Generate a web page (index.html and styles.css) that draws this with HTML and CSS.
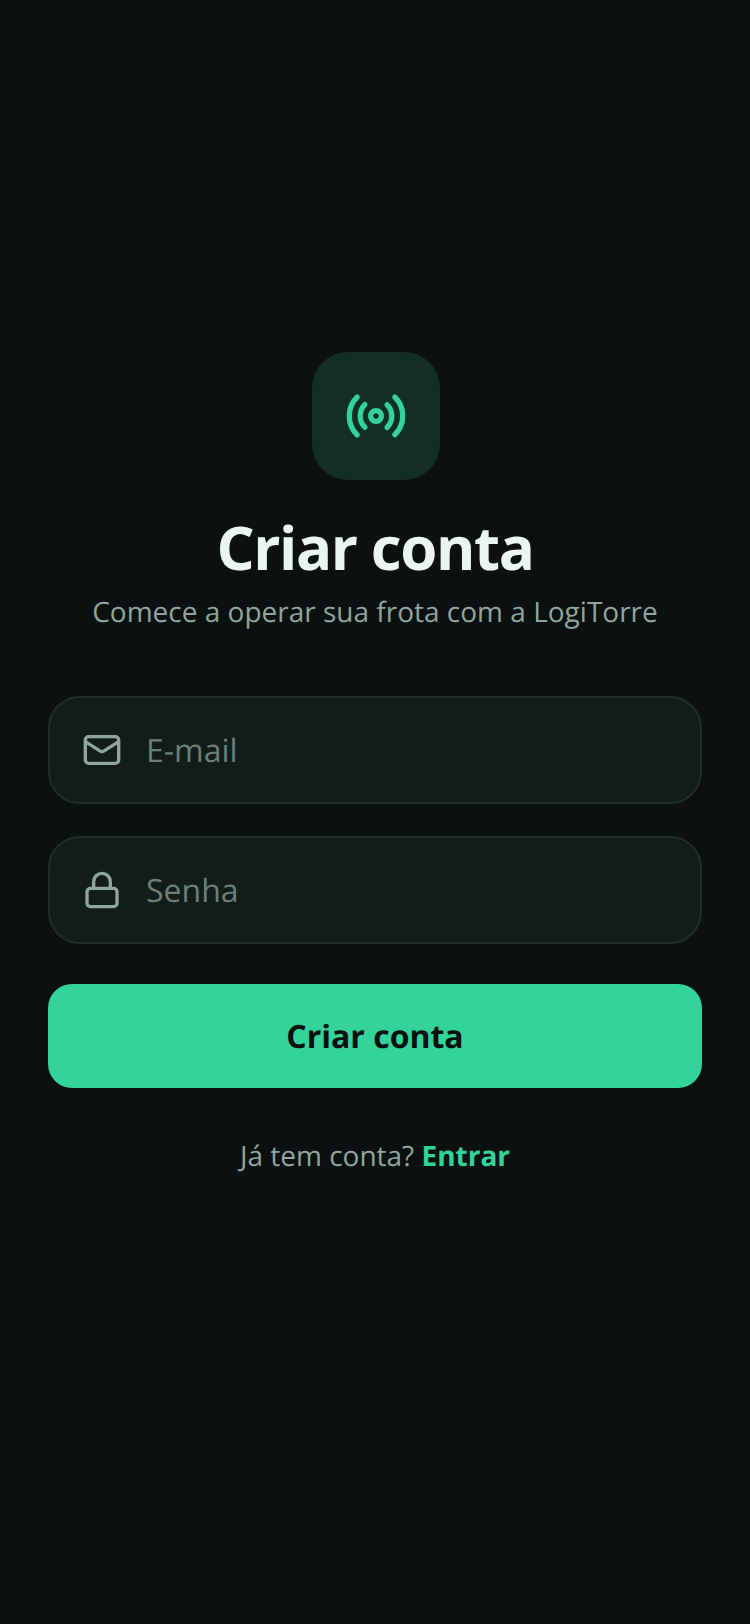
FILE: index.html
```html
<!DOCTYPE html>
<html lang="pt-BR">
<head>
    <meta charset="UTF-8">
    <meta name="viewport" content="width=device-width, initial-scale=1.0">
    <title>Criar conta - LogiTorre</title>
    <link rel="stylesheet" href="styles.css">
</head>
<body>
    <main class="screen">
        <div class="logo-box">
            <svg class="logo-icon" viewBox="0 0 24 24">
                <path d="M4.9 19.1C1 15.2 1 8.8 4.9 4.9"/>
                <path d="M7.8 16.2c-2.3-2.3-2.3-6.1 0-8.5"/>
                <circle cx="12" cy="12" r="2"/>
                <path d="M16.2 7.8c2.3 2.3 2.3 6.1 0 8.5"/>
                <path d="M19.1 4.9C23 8.8 23 15.1 19.1 19"/>
            </svg>
        </div>

        <h1 class="title">Criar conta</h1>
        <p class="subtitle">Comece a operar sua frota com a LogiTorre</p>

        <form class="form">
            <label class="field">
                <svg class="field-icon" viewBox="0 0 24 24">
                    <rect x="2" y="4" width="20" height="16" rx="2"/>
                    <path d="m22 7-8.97 5.7a1.94 1.94 0 0 1-2.06 0L2 7"/>
                </svg>
                <input class="field-input" type="email" placeholder="E-mail">
            </label>
            <label class="field">
                <svg class="field-icon" viewBox="0 0 24 24">
                    <rect x="3" y="11" width="18" height="11" rx="2"/>
                    <path d="M7 11V7a5 5 0 0 1 10 0v4"/>
                </svg>
                <input class="field-input" type="password" placeholder="Senha">
            </label>
            <button class="submit" type="button">Criar conta</button>
        </form>

        <p class="signin">Já tem conta? <a href="#" class="signin-link">Entrar</a></p>
    </main>
</body>
</html>
```

FILE: styles.css
```css
:root {
    --bg: #0b1110;
    --green: #34d399;
    --field-bg: #121d1a;
    --field-border: #1f2d29;
    --text: #eaf5f1;
    --muted: #8fa59d;
    --placeholder: #6b7f78;
}

* {
    margin: 0;
    padding: 0;
    box-sizing: border-box;
    font-family: 'Open Sans', sans-serif;
    text-rendering: geometricPrecision;
}

body {
    background: var(--bg);
    min-height: 100vh;
}

.screen {
    display: flex;
    flex-direction: column;
    align-items: center;
    padding: 352px 48px 0;
}

.logo-box {
    width: 128px;
    height: 128px;
    margin-left: 2px;
    border-radius: 36px;
    background: #132e26;
    display: flex;
    align-items: center;
    justify-content: center;
}

.logo-icon {
    width: 64px;
    height: 64px;
    fill: none;
    stroke: var(--green);
    stroke-width: 2;
    stroke-linecap: round;
    stroke-linejoin: round;
}

.title {
    margin-top: 25px;
    font-size: 60px;
    line-height: 84px;
    font-weight: 700;
    letter-spacing: -1.4px;
    color: var(--text);
}

.subtitle {
    margin-top: 3px;
    font-size: 28px;
    line-height: 40px;
    color: var(--muted);
}

.form {
    width: 100%;
    margin-top: 64px;
    display: flex;
    flex-direction: column;
}

.field {
    height: 108px;
    margin-bottom: 32px;
    padding: 0 32px;
    display: flex;
    align-items: center;
    gap: 24px;
    background: var(--field-bg);
    border: 2px solid var(--field-border);
    border-radius: 32px;
}

.field-icon {
    width: 40px;
    height: 40px;
    flex-shrink: 0;
    fill: none;
    stroke: var(--muted);
    stroke-width: 2;
    stroke-linecap: round;
    stroke-linejoin: round;
}

.field-input {
    flex: 1;
    min-width: 0;
    background: none;
    border: none;
    outline: none;
    font-size: 32px;
    color: var(--text);
}

.field-input::placeholder {
    color: var(--placeholder);
    opacity: 1;
}

.submit {
    height: 104px;
    margin-top: 8px;
    background: var(--green);
    border: none;
    border-radius: 24px;
    color: #0b1110;
    font-size: 32px;
    font-weight: 700;
}

.signin {
    margin-top: 48px;
    font-size: 28px;
    line-height: 40px;
    color: var(--muted);
}

.signin-link {
    color: var(--green);
    font-weight: 700;
    text-decoration: none;
}
```
